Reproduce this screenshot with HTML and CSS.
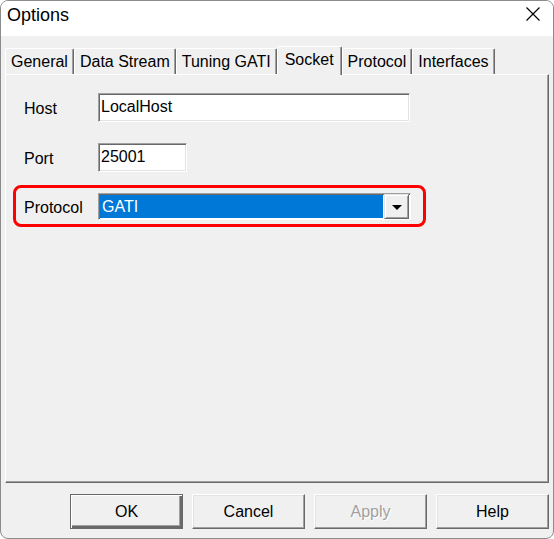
FILE: index.html
```html
<!DOCTYPE html>
<html lang="en">
<head>
    <meta charset="UTF-8">
    <title>Options</title>
    <link rel="stylesheet" href="styles.css">
</head>
<body>
    <div class="window">
        <div class="titlebar">
            <span class="title">Options</span>
            <svg class="close" width="14" height="14" viewBox="0 0 14 14">
                <path d="M0.5 0.5 L13.5 13.5 M13.5 0.5 L0.5 13.5" stroke="#000" stroke-width="1.2" fill="none"/>
            </svg>
        </div>
        <div class="dialog">
            <div class="tabs">
                <div class="tab">General</div>
                <div class="tab">Data Stream</div>
                <div class="tab">Tuning GATI</div>
                <div class="tab active">Socket</div>
                <div class="tab">Protocol</div>
                <div class="tab">Interfaces</div>
            </div>
            <div class="panel">
                <div class="row">
                    <span class="label">Host</span>
                    <div class="field field-host">LocalHost</div>
                </div>
                <div class="row">
                    <span class="label">Port</span>
                    <div class="field field-port">25001</div>
                </div>
                <div class="row highlight">
                    <span class="label">Protocol</span>
                    <div class="combo">
                        <span class="combo-value">GATI</span>
                        <span class="combo-button">
                            <svg width="10" height="5" viewBox="0 0 10 5"><path d="M0 0 H10 L5 5 Z" fill="#000"/></svg>
                        </span>
                    </div>
                </div>
            </div>
            <div class="buttons">
                <button class="btn btn-default">OK</button>
                <button class="btn">Cancel</button>
                <button class="btn" disabled>Apply</button>
                <button class="btn">Help</button>
            </div>
        </div>
    </div>
</body>
</html>
```

FILE: styles.css
```css
body {
    margin: 0;
    background-color: #fff;
    font-family: "Liberation Sans", Arial, sans-serif;
    font-size: 16px;
    color: #000;
}
.window {
    width: 554px;
    height: 539px;
    box-sizing: border-box;
    border: 1px solid #8c8c8c;
    border-radius: 8px;
    background-color: #f0f0f0;
    overflow: hidden;
}
.titlebar {
    height: 35px;
    background-color: #fff;
    display: flex;
    justify-content: space-between;
    align-items: flex-start;
    padding: 0 13px 0 6px;
}
.title {
    font-size: 18px;
    line-height: 28px;
}
.close {
    margin-top: 6px;
}
.dialog {
    padding: 0 4px;
}
.tabs {
    display: flex;
    align-items: flex-end;
    height: 28px;
    margin-top: 10px;
}
.tab {
    box-sizing: border-box;
    height: 26px;
    line-height: 25px;
    padding: 0 5px;
    border-top: 1px solid #fff;
    border-left: 1px solid #fff;
    border-right: 1px solid #696969;
    box-shadow: inset -1px 0 #a0a0a0;
    border-radius: 2px 2px 0 0;
    background-color: #f0f0f0;
    white-space: nowrap;
}
.tab.active {
    height: 29px;
    padding: 0 7px 3px;
    margin-bottom: -1px;
    position: relative;
    z-index: 1;
}
.panel {
    box-sizing: border-box;
    height: 409px;
    border-top: 1px solid #fff;
    border-left: 1px solid #fff;
    border-right: 1px solid #696969;
    border-bottom: 1px solid #696969;
    box-shadow: inset -1px -1px #a0a0a0;
    padding: 18px 0 0 7px;
}
.row {
    display: flex;
    align-items: center;
    padding-left: 11px;
    margin-bottom: 21px;
}
.label {
    width: 74px;
    padding-top: 2px;
}
.field {
    box-sizing: border-box;
    height: 29px;
    line-height: 25px;
    padding-left: 2px;
    background-color: #fff;
    border: 1px solid;
    border-color: #a0a0a0 #fff #fff #a0a0a0;
    box-shadow: inset 1px 1px #696969, inset -1px -1px #e3e3e3;
}
.field-host {
    width: 312px;
}
.field-port {
    width: 89px;
}
.highlight {
    box-sizing: border-box;
    width: 413px;
    margin-top: -8px;
    padding: 5px 0 4px 8px;
    border: 3px solid #ff0000;
    border-radius: 8px;
}
.combo {
    box-sizing: border-box;
    width: 313px;
    height: 27px;
    display: flex;
    padding: 1px;
    background-color: #fff;
    border: 1px solid;
    border-color: #a0a0a0 #fff #fff #a0a0a0;
    box-shadow: inset 1px 1px #696969;
}
.combo-value {
    flex: 1;
    background-color: #0078d7;
    color: #fff;
    line-height: 23px;
    padding-left: 2px;
}
.combo-button {
    box-sizing: border-box;
    width: 25px;
    height: 25px;
    margin: -1px 0 0 1px;
    display: flex;
    align-items: center;
    justify-content: center;
    padding-top: 2px;
    background-color: #f0f0f0;
    border: 1px solid;
    border-color: #e3e3e3 #696969 #696969 #e3e3e3;
    box-shadow: inset 1px 1px #fff, inset -1px -1px #a0a0a0;
}
.buttons {
    display: flex;
    justify-content: flex-end;
    gap: 9px;
    margin-top: 11px;
}
.btn {
    box-sizing: border-box;
    width: 113px;
    height: 35px;
    font-family: "Liberation Sans", Arial, sans-serif;
    font-size: 16px;
    color: #000;
    background-color: #f0f0f0;
    border: 1px solid;
    border-color: #fff #696969 #696969 #fff;
    box-shadow: inset -1px -1px #a0a0a0, inset 1px 1px #e3e3e3;
    padding: 0;
}
.btn-default {
    border-color: #696969;
    box-shadow: inset 1px 1px #fff, inset -2px -2px #696969, inset -3px -3px #a0a0a0;
}
.btn:disabled {
    color: #a0a0a0;
    text-shadow: 1px 1px #fff;
}
```
